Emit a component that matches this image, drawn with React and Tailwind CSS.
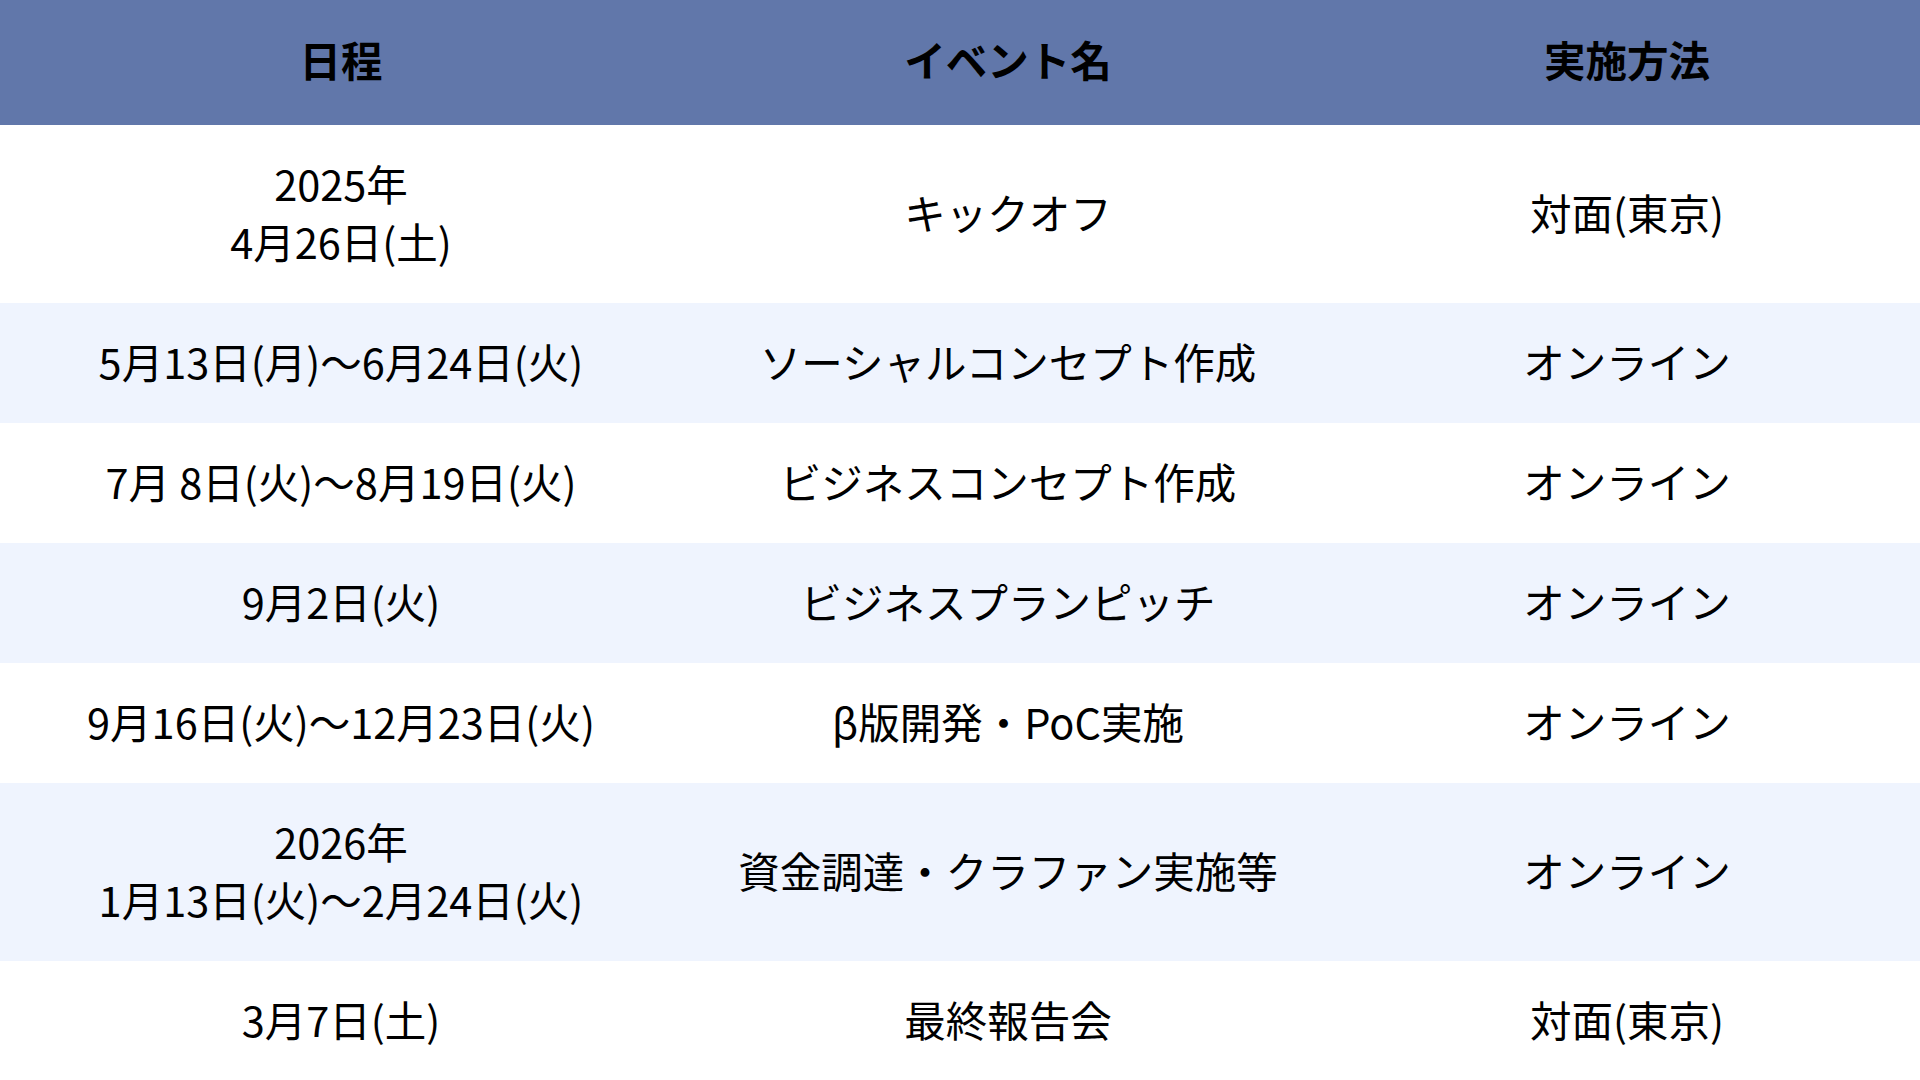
import React from "react";

const rows = [
  { date: ["2025年", "4月26日(土)"], name: "キックオフ", method: "対面(東京)", alt: false },
  { date: ["5月13日(月)〜6月24日(火)"], name: "ソーシャルコンセプト作成", method: "オンライン", alt: true },
  { date: ["7月 8日(火)〜8月19日(火)"], name: "ビジネスコンセプト作成", method: "オンライン", alt: false },
  { date: ["9月2日(火)"], name: "ビジネスプランピッチ", method: "オンライン", alt: true },
  { date: ["9月16日(火)〜12月23日(火)"], name: "β版開発・PoC実施", method: "オンライン", alt: false },
  { date: ["2026年", "1月13日(火)〜2月24日(火)"], name: "資金調達・クラファン実施等", method: "オンライン", alt: true },
  { date: ["3月7日(土)"], name: "最終報告会", method: "対面(東京)", alt: false },
];

export default function App() {
  return (
    <div
      className="w-[1920px] h-[1080px] bg-white text-black overflow-hidden"
      style={{ fontFamily: '"Noto Sans CJK JP", "Noto Sans", sans-serif' }}
    >
      <div className="grid grid-cols-[682px_652px_586px] h-[125px] bg-[#6177aa] items-center text-[41.5px] font-bold leading-[58px] pb-[8px]">
        <div className="text-center">日程</div>
        <div className="text-center">イベント名</div>
        <div className="text-center">実施方法</div>
      </div>
      {rows.map((r, i) => (
        <div
          key={i}
          className={
            "grid grid-cols-[682px_652px_586px] items-center text-[41.5px] leading-[58px] pt-[29px] pb-[33px] " +
            (r.alt ? "bg-[#eff4fe]" : "bg-white")
          }
        >
          <div className="text-center">
            {r.date.map((d, j) => (
              <div key={j}>{d}</div>
            ))}
          </div>
          <div className="text-center">{r.name}</div>
          <div className="text-center">{r.method}</div>
        </div>
      ))}
    </div>
  );
}
